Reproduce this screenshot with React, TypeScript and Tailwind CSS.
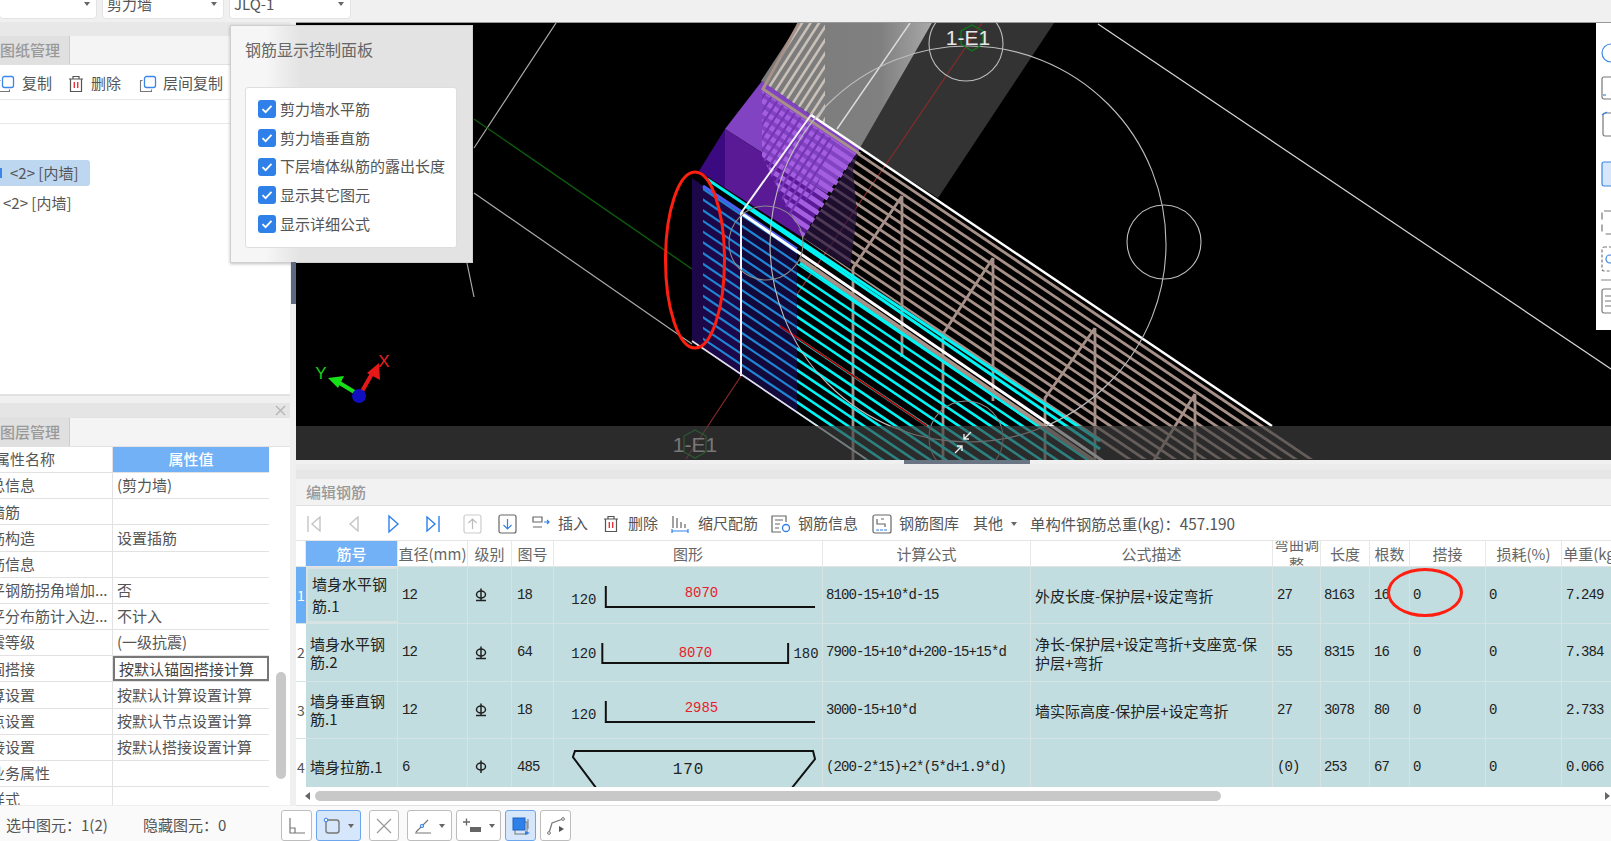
import { type ReactNode } from 'react';

const cjk = "font-['Noto_Sans_CJK_SC','Noto_Sans',sans-serif]";
const mono = "font-['Liberation_Mono','Noto_Sans_CJK_SC',monospace] text-[14px] tracking-[-0.9px]";

const Caret = () => <span className="w-0 h-0 border-x-[3px] border-x-transparent border-t-[4px] border-t-[#666]" />;

const Dropdown = ({ label, className }: { label: string; className: string }) => (
  <div className={`h-[30px] -mt-[11px] bg-white rounded border border-[#e4e4e4] flex items-center justify-between pl-[4px] pr-[6px] text-[15px] text-[#555] ${className}`}>
    <span>{label}</span>
    <Caret />
  </div>
);

const TrashIcon = () => (
  <svg width="16" height="18" viewBox="0 0 16 18" fill="none">
    <path d="M1 4H15M5 4V1.5H11V4M2.5 4V16.5H13.5V4" stroke="#555" strokeWidth="1.2" />
    <path d="M6.3 7V13M9.7 7V13" stroke="#e33" strokeWidth="1.4" />
  </svg>
);

const CopyIcon = () => (
  <svg width="18" height="18" viewBox="0 0 18 18" fill="none">
    <rect x="5.5" y="1.5" width="11" height="11" rx="2" fill="#fff" stroke="#3b86e8" strokeWidth="1.3" />
    <path d="M3.5 5.5H1.5V16.5H12.5V14.5" stroke="#777" strokeWidth="1.1" />
  </svg>
);

const Check = () => (
  <span className="w-[18px] h-[18px] rounded-[3px] bg-[#2f80e8] flex items-center justify-center">
    <svg width="12" height="12" viewBox="0 0 12 12" fill="none">
      <path d="M1.5 6.2L4.6 9.2L10.5 2.8" stroke="#fff" strokeWidth="1.8" />
    </svg>
  </span>
);

const panelItems = ['剪力墙水平筋', '剪力墙垂直筋', '下层墙体纵筋的露出长度', '显示其它图元', '显示详细公式'];

const ControlPanel = () => (
  <div className="absolute left-[230px] top-[25px] w-[243px] h-[238px] bg-[linear-gradient(90deg,#f6f6f6_0,#f6f6f6_35px,#e3e3e3_70px)] border border-[#cfcfcf] shadow-[0_1px_3px_rgba(0,0,0,0.25)] pl-[14px] pr-[15px]">
    <div className="text-[16px] text-[#666] h-[61px] pt-[10px] leading-[26px]">钢筋显示控制面板</div>
    <div className="h-[161px] bg-white rounded-[3px] border border-[#dedede] pl-[12px] pt-[12px] flex flex-col gap-[10.8px]">
      {panelItems.map((t) => (
        <div key={t} className="flex items-center gap-[4px] h-[18px] text-[15px] text-[#555] whitespace-nowrap">
          <Check />
          <span>{t}</span>
        </div>
      ))}
    </div>
  </div>
);

const propRows = [
  ['总信息', '(剪力墙)'],
  ['墙筋', ''],
  ['筋构造', '设置插筋'],
  ['筋信息', ''],
  ['平钢筋拐角增加...', '否'],
  ['平分布筋计入边...', '不计入'],
  ['震等级', '(一级抗震)'],
  ['固搭接', '按默认锚固搭接计算'],
  ['算设置', '按默认计算设置计算'],
  ['点设置', '按默认节点设置计算'],
  ['接设置', '按默认搭接设置计算'],
  ['业务属性', ''],
  ['样式', ''],
];

const LeftColumn = () => (
  <div className="w-[290px] mr-[6px] flex flex-col text-[15px] text-[#555]">
    <div className="h-[374px] bg-white flex flex-col border-b-2 border-[#e2e2e2]">
      <div className="h-[14px] bg-[#e8e8e8]" />
      <div className="h-[29px] bg-[#f4f4f4] border-b border-[#e2e2e2]">
        <div className="w-[70px] h-[28px] pt-[1px] bg-[#e0e0e0] border-r border-[#cccccc] flex items-center text-[#999] font-medium">图纸管理</div>
      </div>
      <div className="h-[35px] pt-[3px] flex items-center border-b border-[#e8e8e8]">
        <span className="-ml-[3px]"><CopyIcon /></span>
        <span className="ml-[7px]">复制</span>
        <span className="ml-[16px]"><TrashIcon /></span>
        <span className="ml-[7px]">删除</span>
        <span className="ml-[18px]"><CopyIcon /></span>
        <span className="ml-[6px]">层间复制</span>
      </div>
      <div className="h-[24px] border-b border-[#e8e8e8]" />
      <div className="mt-[36px] w-[90px] h-[26px] bg-[#bdd7f1] rounded-r-[3px] flex items-center whitespace-nowrap">
        <span className="w-[2px] h-[10px] bg-[#3b86e8]" />
        <span className="ml-[8px]">&lt;2&gt; [内墙]</span>
      </div>
      <div className="mt-[4px] h-[26px] pl-[3px] flex items-center whitespace-nowrap">&lt;2&gt; [内墙]</div>
    </div>
    <div className="h-[7px]" />
    <div className="h-[14px] bg-[#e5e5e5] flex items-center justify-end pr-[4px]">
      <svg width="11" height="11" viewBox="0 0 11 11"><path d="M1 1L10 10M10 1L1 10" stroke="#b5b5b5" strokeWidth="1.4" /></svg>
    </div>
    <div className="h-[30px] bg-[#f4f4f4] border-y border-[#e2e2e2]">
      <div className="w-[70px] h-[28px] bg-[#e0e0e0] border-r border-[#cccccc] flex items-center text-[#999] font-medium">图层管理</div>
    </div>
    <div className="relative h-[358px] bg-white overflow-hidden">
      <div className="w-[269px]">
        <div className="flex h-[26.17px] border-b border-[#e2e2e2]">
          <div className="w-[113px] border-r border-[#e2e2e2] flex items-center overflow-hidden">
            <span className="-ml-[5px] whitespace-nowrap">属性名称</span>
          </div>
          <div className="flex-1 bg-[#72b1f6] text-white font-medium flex items-center justify-center">属性值</div>
        </div>
        {propRows.map(([k, v]) => (
          <div key={k} className="flex h-[26.17px] border-b border-[#e2e2e2]">
            <div className="w-[113px] border-r border-[#e2e2e2] flex items-center overflow-hidden">
              <span className="-ml-[10px] whitespace-nowrap">{k}</span>
            </div>
            <div className={`flex-1 flex items-center pl-[4px] whitespace-nowrap ${k === '固搭接' ? 'border-2 border-[#777] pl-[3px] text-[#444]' : ''}`}>{v}</div>
          </div>
        ))}
      </div>
      <div className="absolute left-[276px] top-[225px] w-[10px] h-[107px] rounded-[5px] bg-[#c8c8c8]" />
    </div>
  </div>
);

const range = (n: number) => Array.from({ length: n }, (_, i) => i);

// parallel bars running down to the right, cut by a clip path
const Stripes = ({ clip, color, width, gap, dash }: { clip: string; color: string; width: number; gap: number; dash?: string }) => (
  <g clipPath={`url(#${clip})`}>
    {range(Math.ceil(1300 / gap)).map((k) => {
      const y = -900 + k * gap;
      return <line key={k} x1={296} y1={y} x2={1400} y2={y + 1104 * 0.675} stroke={color} strokeWidth={width} strokeDasharray={dash} />;
    })}
  </g>
);

// same, for the bars of the wall that runs up to the right
const StripesUp = ({ clip, color, width, gap }: { clip: string; color: string; width: number; gap: number }) => (
  <g clipPath={`url(#${clip})`}>
    {range(Math.ceil(340 / gap)).map((k) => {
      const x = 640 + k * gap;
      return <line key={k} x1={x} y1={260} x2={x + 170} y2={260 - 170 * 1.55} stroke={color} strokeWidth={width} />;
    })}
  </g>
);

const Struts = () => (
  <g stroke="#a69088" strokeWidth="2.8" fill="none">
    <path d="M902 195V356M902 195L853 267V459" />
    <path d="M993 257V400M993 257L943 333V459" />
    <path d="M1095 327V459M1095 327L1045 397V459" />
    <path d="M1195 393V459M1195 393L1154 459" />
  </g>
);

const Viewport3D = () => (
  <svg className="absolute inset-0" width="1315" height="437" viewBox="296 22 1315 437">
    <defs>
      <linearGradient id="band" x1="0" y1="0" x2="1" y2="0">
        <stop offset="0" stopColor="#7a7a7a" />
        <stop offset="0.7" stopColor="#808080" />
        <stop offset="1" stopColor="#a8a8a8" />
      </linearGradient>
      <clipPath id="c-top"><polygon points="799,22 825,22 825,125 764,88" /></clipPath>
      <clipPath id="c-dots"><polygon points="762,90 856,153 803,237 762,155" /></clipPath>
      <clipPath id="c-slots"><polygon points="762,90 835,140 815,190 790,215 762,155" /></clipPath>
      <clipPath id="c-mesh"><polygon points="860,148 1322,458 1122,458 803,237" /></clipPath>
      <clipPath id="c-blue"><polygon points="703,185 797,248 797,412 703,348" /></clipPath>
      <clipPath id="c-cyan"><polygon points="797,262 1110,470 1110,459 866,459 797,412" /></clipPath>
    </defs>
    <rect x="296" y="22" width="1315" height="437" fill="#000" />

    <polygon points="860,147 932,22 1054,22 938,197" fill="#333" />
    <polygon points="799,22 932,22 860,147 761,80" fill="url(#band)" />
    <StripesUp clip="c-top" color="#c9c0b8" width={2.6} gap={8.5} />
    <path d="M910 22L837 128" stroke="#ddd" strokeWidth="1.4" />

    <path d="M556 22L474 147M467 262L474 296" stroke="#aaa" strokeWidth="1.2" fill="none" />
    <path d="M474 192L692 343" stroke="#aaa" strokeWidth="1.2" />
    <path d="M474 118L692 268" stroke="#0d5c0d" strokeWidth="1.4" />
    <path d="M1098 23L1611 368" stroke="#d5d5d5" strokeWidth="1.2" />
    <path d="M982 22L900 143L741 375L686 458" stroke="#8a2a2a" strokeWidth="1.2" fill="none" />

    <polygon points="762,80 860,148 827,193 725,128" fill="#8243c2" />
    <polygon points="725,128 827,193 803,237 725,187" fill="#5a1a96" />
    <polygon points="699,170 725,128 725,187" fill="#3c0a80" />
    <Stripes clip="c-dots" color="#a45ee0" width={5} gap={10.7} />
    <StripesUp clip="c-slots" color="#7436b4" width={2.2} gap={8.5} />

    <polygon points="692,177 741,212 741,375 692,340" fill="#1c0848" />
    <polygon points="741,212 797,250 797,412 741,375" fill="#12083a" />
    <Stripes clip="c-blue" color="#1f84d2" width={2.2} gap={10.7} />

    <Stripes clip="c-mesh" color="#a69088" width={2.8} gap={10.2} />
    <polygon points="860,148 853,167 857,213 850,267 803,237" fill="#2a1440" opacity="0.7" />
    <Struts />
    <Stripes clip="c-cyan" color="#00f4f4" width={2.6} gap={10.7} />

    <path d="M703 185L797 248" stroke="#4a60f0" strokeWidth="3" />
    <path d="M707 178L1100 440" stroke="#00f4f4" strokeWidth="3" />
    <path d="M745 205L1100 448" stroke="#00f4f4" strokeWidth="3" />
    <path d="M800 262L1100 467" stroke="#00f4f4" strokeWidth="3" />
    <path d="M800 258L1122 479" stroke="#a69088" strokeWidth="4" />
    <path d="M741 212L1122 473" stroke="#fff" strokeWidth="3" />
    <path d="M799 22L763 88L860 153" stroke="#a69088" strokeWidth="3" fill="none" />
    <path d="M811 114L1272 425" stroke="#fff" strokeWidth="2.5" />
    <path d="M811 114L741 212V375" stroke="#f2f2f2" strokeWidth="2" fill="none" />
    <path d="M692 340L866 458" stroke="#e8e0e8" strokeWidth="1.6" />
    <path d="M780 325L927 425" stroke="#b00000" strokeWidth="2" />

    <g fill="none" stroke="#bdbdbd" strokeWidth="1.1">
      <circle cx="968" cy="243" r="198" />
      <circle cx="966" cy="43" r="37" />
      <circle cx="1164" cy="241" r="37" />
      <circle cx="766" cy="242" r="37" stroke="#8a8a8a" />
      <circle cx="966" cy="437" r="37" stroke="#8a8a8a" />
    </g>
    <polygon points="972,24 983,30 983,43 972,50 961,43 961,30" fill="none" stroke="#0d7a1a" strokeWidth="1.3" />
    <text x="968" y="44" textAnchor="middle" fontSize="21" fill="#e8e8e8" fontFamily="Liberation Sans">1-E1</text>

    <rect x="296" y="425" width="1315" height="34" fill="#424242" opacity="0.65" />

    <polygon points="695,429 706,435 706,451 695,457 684,451 684,435" fill="none" stroke="#2c5a34" strokeWidth="1.2" />
    <text x="695" y="451" textAnchor="middle" fontSize="21" fill="#777" fontFamily="Liberation Sans">1-E1</text>

    <path d="M971 431L964 438M964 433V438H969M955 452L962 445M957 445H962V450" stroke="#eee" strokeWidth="1.4" fill="none" />

    <path d="M356 392L338 381" stroke="#18e018" strokeWidth="4" />
    <polygon points="328,377 344,375 338,387" fill="#18e018" />
    <path d="M361 392L373 371" stroke="#e81818" strokeWidth="4" />
    <polygon points="379,362 380,379 367,372" fill="#e81818" />
    <circle cx="359" cy="395" r="7" fill="#1010c0" />
    <text x="321" y="378" textAnchor="middle" fontSize="17" fill="#18d018" fontFamily="Liberation Sans">Y</text>
    <text x="384" y="366" textAnchor="middle" fontSize="17" fill="#e82020" fontFamily="Liberation Sans">X</text>

    <ellipse cx="695" cy="259" rx="29.5" ry="88" fill="none" stroke="#ff1f10" strokeWidth="3" />
  </svg>
);

const ViewTools = () => (
  <div className="absolute right-0 top-0 w-[15px] h-[307px] bg-white pl-[5px] overflow-hidden">
    <svg width="10" height="307" viewBox="0 0 10 307" fill="none" strokeWidth="1.2">
      <circle cx="10" cy="30" r="9" stroke="#3b86e8" />
      <rect x="1" y="54" width="14" height="22" rx="2" stroke="#777" />
      <path d="M2 72H5" stroke="#3b86e8" />
      <rect x="2" y="90" width="14" height="23" rx="2" stroke="#777" />
      <path d="M1 92L6 89" stroke="#3b86e8" />
      <rect x="1" y="139" width="14" height="24" rx="2" stroke="#3b86e8" fill="#d6e6fb" />
      <rect x="1" y="188" width="14" height="23" rx="2" stroke="#777" strokeDasharray="7 5" />
      <rect x="1" y="224" width="14" height="24" rx="2" stroke="#777" strokeDasharray="3 2" />
      <circle cx="9" cy="236" r="4" stroke="#3b86e8" />
      <path d="M0 257H10" stroke="#999" />
      <rect x="1" y="266" width="14" height="24" rx="2" stroke="#777" />
      <path d="M4 273H10M4 278H10M4 283H10" stroke="#777" />
    </svg>
  </div>
);

const NavIcon = ({ d, color }: { d: string; color: string }) => (
  <svg width="16" height="20" viewBox="0 0 16 20" fill="none" stroke={color} strokeWidth="1.4"><path d={d} /></svg>
);

const BoxArrow = ({ d, color, border }: { d: string; color: string; border: string }) => (
  <svg width="19" height="20" viewBox="0 0 19 20" fill="none">
    <rect x="1" y="1" width="17" height="18" rx="2" stroke={border} strokeWidth="1.2" />
    <path d={d} stroke={color} strokeWidth="1.2" />
  </svg>
);

const ToolText = ({ className, children }: { className: string; children: ReactNode }) => (
  <span className={`whitespace-nowrap ${className}`}>{children}</span>
);

const RebarToolbar = () => (
  <div className="h-[35px] pt-[1px] bg-white border-b border-[#e6e6e6] flex items-center pl-[10px] text-[15px] text-[#555]">
    <NavIcon d="M2 2V18M14 3L6 10L14 17Z" color="#c4c4c4" />
    <span className="ml-[24px]"><NavIcon d="M12 3L4 10L12 17Z" color="#c4c4c4" /></span>
    <span className="ml-[23px]"><NavIcon d="M4 2L13 10L4 18Z" color="#2f80e8" /></span>
    <span className="ml-[24px]"><NavIcon d="M2 3L10 10L2 17ZM14 2V18" color="#2f80e8" /></span>
    <span className="ml-[22px]"><BoxArrow d="M9.5 15V5M5.5 9L9.5 5L13.5 9" color="#bbb" border="#ccc" /></span>
    <span className="ml-[16px]"><BoxArrow d="M9.5 5V15M5.5 11L9.5 15L13.5 11" color="#2f80e8" border="#666" /></span>
    <span className="ml-[14px]">
      <svg width="20" height="20" viewBox="0 0 20 20" fill="none">
        <path d="M2 3H11V8H2ZM2 13H11" stroke="#666" strokeWidth="1.2" />
        <path d="M13 8H18M16 6L18 8L16 10" stroke="#2f80e8" strokeWidth="1.2" />
      </svg>
    </span>
    <ToolText className="ml-[7px]">插入</ToolText>
    <span className="ml-[15px]"><TrashIcon /></span>
    <ToolText className="ml-[9px]">删除</ToolText>
    <span className="ml-[13px]">
      <svg width="18" height="20" viewBox="0 0 18 20" fill="none">
        <path d="M2 2V14M6 4V14M10 8V14M14 10V14" stroke="#666" strokeWidth="1.2" />
        <path d="M1 17H17M1 15V19M17 15V19" stroke="#2f80e8" strokeWidth="1.2" />
      </svg>
    </span>
    <ToolText className="ml-[9px]">缩尺配筋</ToolText>
    <span className="ml-[13px]">
      <svg width="20" height="20" viewBox="0 0 20 20" fill="none">
        <path d="M15 8V2H1V18H10" stroke="#666" strokeWidth="1.2" />
        <path d="M4 6H12M4 10H9M4 14H8" stroke="#666" strokeWidth="1.2" />
        <circle cx="15" cy="14" r="3.5" stroke="#2f80e8" strokeWidth="1.3" />
      </svg>
    </span>
    <ToolText className="ml-[7px]">钢筋信息</ToolText>
    <span className="ml-[14px]">
      <svg width="20" height="20" viewBox="0 0 20 20" fill="none">
        <rect x="1" y="1" width="18" height="18" rx="2" stroke="#666" strokeWidth="1.2" />
        <path d="M5 5V10H13V13M9 5H12" stroke="#666" strokeWidth="1.2" />
        <path d="M4 16H16" stroke="#2f80e8" strokeWidth="1.2" strokeDasharray="3 1" />
      </svg>
    </span>
    <ToolText className="ml-[7px]">钢筋图库</ToolText>
    <ToolText className="ml-[14px]">其他</ToolText>
    <span className="ml-[8px] flex"><Caret /></span>
    <ToolText className="ml-[13px] text-[15.3px]">单构件钢筋总重(kg)：457.190</ToolText>
  </div>
);

const GradeMark = ({ bar }: { bar: boolean }) => (
  <svg width="12" height="14" viewBox="0 0 12 14" fill="none" stroke="#222" strokeWidth="1.5">
    <ellipse cx="6" cy="6.5" rx="4.5" ry="3.5" />
    <path d="M6 0.5V13" />
    {bar && <path d="M1 12.5H11" />}
  </svg>
);

const widths = ['w-[10px]', 'w-[92px]', 'w-[70px]', 'w-[44px]', 'w-[42px]', 'w-[269px]', 'w-[208px]', 'w-[242px]', 'w-[48px]', 'w-[49px]', 'w-[40px]', 'w-[76px]', 'w-[76px]', 'w-[60px]'];

const headers = ['', '筋号', '直径(mm)', '级别', '图号', '图形', '计算公式', '公式描述', '弯曲调整', '长度', '根数', '搭接', '损耗(%)', '单重(kg)'];

const ShapeL = ({ value }: { value: string }) => (
  <svg width="269" height="57" viewBox="555 0 269 57">
    <text x="585" y="37" textAnchor="middle" fontSize="14" fontFamily="Liberation Mono" fill="#222">120</text>
    <path d="M607 19V40H817" stroke="#111" strokeWidth="2" fill="none" />
    <text x="703" y="30" textAnchor="middle" fontSize="14" fontFamily="Liberation Mono" fill="#e8202a">{value}</text>
  </svg>
);

const ShapeU = () => (
  <svg width="269" height="57" viewBox="555 0 269 57">
    <text x="585" y="34" textAnchor="middle" fontSize="14" fontFamily="Liberation Mono" fill="#222">120</text>
    <path d="M603.5 19V39H790V19" stroke="#111" strokeWidth="2" fill="none" />
    <text x="697" y="33" textAnchor="middle" fontSize="14" fontFamily="Liberation Mono" fill="#e8202a">8070</text>
    <text x="808" y="34" textAnchor="middle" fontSize="14" fontFamily="Liberation Mono" fill="#222">180</text>
  </svg>
);

const ShapeHook = () => (
  <svg width="269" height="57" viewBox="555 0 269 57">
    <path d="M598 50L574 18L576 12H815L817 20L793 50" stroke="#111" strokeWidth="2" fill="none" />
    <text x="690" y="35" textAnchor="middle" fontSize="16" fontFamily="Liberation Mono" letterSpacing="1" fill="#222">170</text>
  </svg>
);

type Row = {
  no: string; name: string; dia: string; bar: boolean; fig: string; shape: ReactNode; formula: string; desc: string;
  bend: string; len: string; count: string; lap: string; loss: string; unit: string; h: string;
};

const rows: Row[] = [
  { no: '1', name: '墙身水平钢筋.1', dia: '12', bar: true, fig: '18', shape: <ShapeL value="8070" />, formula: '8100-15+10*d-15', desc: '外皮长度-保护层+设定弯折', bend: '27', len: '8163', count: '16', lap: '0', loss: '0', unit: '7.249', h: 'h-[57px]' },
  { no: '2', name: '墙身水平钢筋.2', dia: '12', bar: true, fig: '64', shape: <ShapeU />, formula: '7900-15+10*d+200-15+15*d', desc: '净长-保护层+设定弯折+支座宽-保护层+弯折', bend: '55', len: '8315', count: '16', lap: '0', loss: '0', unit: '7.384', h: 'h-[58px]' },
  { no: '3', name: '墙身垂直钢筋.1', dia: '12', bar: true, fig: '18', shape: <ShapeL value="2985" />, formula: '3000-15+10*d', desc: '墙实际高度-保护层+设定弯折', bend: '27', len: '3078', count: '80', lap: '0', loss: '0', unit: '2.733', h: 'h-[57px]' },
  { no: '4', name: '墙身拉筋.1', dia: '6', bar: false, fig: '485', shape: <ShapeHook />, formula: '(200-2*15)+2*(5*d+1.9*d)', desc: '', bend: '(0)', len: '253', count: '67', lap: '0', loss: '0', unit: '0.066', h: 'h-[57px]' },
];

const cell = 'border-r border-[#d8e2e3] flex items-center overflow-hidden';

const RebarTable = () => (
  <div className="relative h-[246px] bg-white overflow-hidden">
    <div className="flex h-[26px] w-[1320px] text-[15px] text-[#666] border-b border-[#e4e4e4]">
      {headers.map((h, i) => (
        <div
          key={i}
          className={`${widths[i]} shrink-0 flex items-center justify-center overflow-hidden border-r border-[#e8e8e8] leading-[20px] text-center ${i === 1 ? 'bg-[#72b1f6] text-white font-medium' : ''}`}
        >
          {h}
        </div>
      ))}
    </div>
    {rows.map((r) => (
      <div key={r.no} className={`flex ${r.h} w-[1320px] bg-[#c1dde0] border-b border-[#d5e3e4] text-[#222] overflow-hidden`}>
        <div className={`${widths[0]} shrink-0 flex items-center justify-center text-[14px] ${r.no === '1' ? 'bg-[#6aaef5] text-white' : 'bg-white text-[#555]'}`}>{r.no}</div>
        <div className={`${widths[1]} shrink-0 ${cell} text-[15px] leading-[18px] pl-[4px] ${r.no === '1' ? 'border-2 border-[#7b8a8c] pl-[3px] leading-[22px]' : ''}`}>{r.name}</div>
        <div className={`${widths[2]} shrink-0 ${cell} ${mono} pl-[4px]`}>{r.dia}</div>
        <div className={`${widths[3]} shrink-0 ${cell} pl-[7px]`}><GradeMark bar={r.bar} /></div>
        <div className={`${widths[4]} shrink-0 ${cell} ${mono} pl-[5px]`}>{r.fig}</div>
        <div className={`${widths[5]} shrink-0 ${cell}`}>{r.shape}</div>
        <div className={`${widths[6]} shrink-0 ${cell} ${mono} pl-[3px] whitespace-nowrap`}>{r.formula}</div>
        <div className={`${widths[7]} shrink-0 ${cell} text-[15px] leading-[19px] pl-[4px]`}>{r.desc}</div>
        <div className={`${widths[8]} shrink-0 ${cell} ${mono} pl-[4px]`}>{r.bend}</div>
        <div className={`${widths[9]} shrink-0 ${cell} ${mono} pl-[3px]`}>{r.len}</div>
        <div className={`${widths[10]} shrink-0 ${cell} ${mono} pl-[4px]`}>{r.count}</div>
        <div className={`${widths[11]} shrink-0 ${cell} ${mono} pl-[3px]`}>{r.lap}</div>
        <div className={`${widths[12]} shrink-0 ${cell} ${mono} pl-[3px]`}>{r.loss}</div>
        <div className={`${widths[13]} shrink-0 ${cell} ${mono} pl-[4px]`}>{r.unit}</div>
      </div>
    ))}
    <div className="absolute left-[1091px] top-[27px] w-[76px] h-[49px] rounded-[50%] border-[3px] border-[#ff1f10]" />
  </div>
);

const HScroll = () => (
  <div className="h-[19px] bg-white border-b border-[#e2e2e2] flex items-center">
    <span className="ml-[9px] w-0 h-0 border-y-[4px] border-y-transparent border-r-[5px] border-r-[#666]" />
    <span className="ml-[5px] w-[906px] h-[10px] rounded-[5px] bg-[#c8c8c8]" />
    <span className="ml-auto mr-[1px] w-0 h-0 border-y-[4px] border-y-transparent border-l-[5px] border-l-[#666]" />
  </div>
);

const statusButton = 'h-[31px] rounded-[3px] border border-[#bdbdbd] bg-white flex items-center justify-center gap-[7px]';

const StatusBar = () => (
  <div className="h-[35px] bg-[#fafafa] flex items-start text-[15px] text-[#555]">
    <span className="mt-[8px] ml-[6px] w-[137px] whitespace-nowrap">选中图元：1(2)</span>
    <span className="mt-[8px] w-[138px] whitespace-nowrap">隐藏图元：0</span>
    <div className="mt-[4px] flex">
      <div className={`${statusButton} w-[31px]`}>
        <svg width="18" height="18" viewBox="0 0 18 18" fill="none" stroke="#777" strokeWidth="1.2"><path d="M2 1V16H17M2 11H7V16" /></svg>
      </div>
      <div className={`${statusButton} w-[45px] ml-[4px] !border-[#6ea6ee] !bg-[#d6e6fb]`}>
        <svg width="18" height="18" viewBox="0 0 18 18" fill="none">
          <rect x="3" y="3" width="13" height="13" rx="2.5" stroke="#777" strokeWidth="1.4" />
          <circle cx="3" cy="3" r="1.8" fill="#fff" stroke="#2f80e8" />
        </svg>
        <Caret />
      </div>
      <div className={`${statusButton} w-[30px] ml-[8px]`}>
        <svg width="18" height="18" viewBox="0 0 18 18" fill="none" stroke="#999" strokeWidth="1.2"><path d="M2 2L16 16M16 2L2 16" /></svg>
      </div>
      <div className={`${statusButton} w-[45px] ml-[8px]`}>
        <svg width="18" height="18" viewBox="0 0 18 18" fill="none" stroke="#777" strokeWidth="1.2">
          <path d="M2 15L14 3M1 16H17" />
          <circle cx="8" cy="9" r="1.5" fill="#fff" stroke="#2f80e8" />
        </svg>
        <Caret />
      </div>
      <div className={`${statusButton} w-[45px] ml-[4px]`}>
        <svg width="20" height="18" viewBox="0 0 20 18" fill="none">
          <path d="M1 5H8M4.5 1.5V8.5" stroke="#666" strokeWidth="1.3" />
          <rect x="8" y="10" width="11" height="5" fill="#666" />
        </svg>
        <Caret />
      </div>
      <div className={`${statusButton} w-[31px] ml-[4px] !border-[#6ea6ee] !bg-[#d6e6fb]`}>
        <svg width="20" height="20" viewBox="0 0 20 20" fill="none">
          <rect x="4" y="6" width="12" height="12" stroke="#777" />
          <rect x="2" y="2" width="12" height="12" fill="#2f80e8" stroke="#1c64c4" />
          <path d="M17 3V13" stroke="#777" />
          <path d="M14 15L19 17L14 19Z" fill="#2f80e8" />
        </svg>
      </div>
      <div className={`${statusButton} w-[31px] ml-[4px]`}>
        <svg width="20" height="20" viewBox="0 0 20 20" fill="none">
          <path d="M3 17L6 7L17 3" stroke="#777" strokeWidth="1.2" />
          <circle cx="3" cy="17" r="1.4" fill="#fff" stroke="#777" />
          <circle cx="17" cy="3" r="1.4" fill="#fff" stroke="#777" />
          <path d="M13 10L18 13L13 16Z" fill="#555" />
        </svg>
      </div>
    </div>
  </div>
);

const App = () => {
  return (
    <div className={`relative w-[1611px] h-[841px] overflow-hidden bg-[#f0f0f0] ${cjk}`}>
      <div className="h-[22px] flex items-start overflow-hidden gap-[5px]">
        <Dropdown label="" className="w-[98px] -ml-[1px]" />
        <Dropdown label="剪力墙" className="w-[122px]" />
        <Dropdown label="JLQ-1" className="w-[122px]" />
      </div>
      <div className="flex h-[784px]">
        <LeftColumn />
        <div className="flex-1 min-w-0 flex flex-col">
          <div className="relative h-[437px] border-t border-[#999]">
            <Viewport3D />
            <ViewTools />
          </div>
          <div className="h-[5px] flex">
            <div className="ml-[608px] w-[126px] bg-[#6b7685]" />
          </div>
          <div className="h-[6px] bg-[#ececec]" />
          <div className="h-[9px] bg-[#e6e6e6]" />
          <div className="h-[27px] bg-[#f2f2f2] border-b border-[#e2e2e2] flex items-center pl-[10px] text-[15px] text-[#999] font-medium">编辑钢筋</div>
          <RebarToolbar />
          <RebarTable />
          <HScroll />
        </div>
      </div>
      <StatusBar />
      <ControlPanel />
      <div className="absolute left-[291px] top-[262px] w-[5px] h-[42px] bg-[#5a6a80]" />
    </div>
  );
};

export default App;
